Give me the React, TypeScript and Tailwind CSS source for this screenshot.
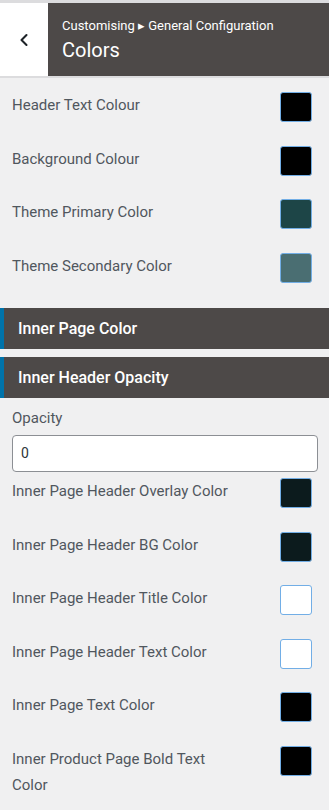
import { ChevronLeft } from "lucide-react";

type Row = { label: string; color: string };

const topRows: Row[] = [
  { label: "Header Text Colour", color: "#000000" },
  { label: "Background Colour", color: "#000000" },
  { label: "Theme Primary Color", color: "#1d4547" },
  { label: "Theme Secondary Color", color: "#4a6e72" },
];

const innerRows: Row[] = [
  { label: "Inner Page Header Overlay Color", color: "#0c1b1d" },
  { label: "Inner Page Header BG Color", color: "#0c1b1d" },
  { label: "Inner Page Header Title Color", color: "#ffffff" },
  { label: "Inner Page Header Text Color", color: "#ffffff" },
  { label: "Inner Page Text Color", color: "#000000" },
  { label: "Inner Product Page Bold Text Color", color: "#000000" },
];

const ColorRow = ({ row }: { row: Row }) => (
  <div className="flex h-[53.5px] items-start justify-between pl-3 pr-[17px]">
    <span className="w-[224px] text-[15px] leading-[26px] font-normal text-[#50575e]">
      {row.label}
    </span>
    <span
      className="block h-[30px] w-[32px] rounded-[3px] border border-[#72aee6]"
      style={{ backgroundColor: row.color }}
    />
  </div>
);

const SectionBar = ({ title }: { title: string }) => (
  <div className="flex h-[41px] items-center border-l-4 border-[#0073aa] bg-[#4d4948] pl-[14px]">
    <span className="text-[16px] font-medium text-white">{title}</span>
  </div>
);

export default function App() {
  return (
    <div
      className="min-h-[810px] w-[329px] bg-[#f0f0f1]"
      style={{ fontFamily: "Roboto, 'Liberation Sans', sans-serif" }}
    >
      <div className="border-t-[3px] border-b-2 border-[#dcdcde]">
        <div className="flex h-[73px]">
          <div className="flex w-[48px] items-center justify-center bg-white text-[#1d2327]">
            <ChevronLeft size={20} strokeWidth={2.5} />
          </div>
          <div className="flex flex-1 flex-col justify-center bg-[#4d4948] pl-[14px] text-white">
            <span className="text-[13px] leading-[18px]">
              Customising ▸ General Configuration
            </span>
            <span className="mt-[3px] text-[20px] leading-[24px]">Colors</span>
          </div>
        </div>
      </div>

      <div className="pt-[14px]">
        {topRows.map((row) => (
          <ColorRow key={row.label} row={row} />
        ))}
      </div>

      <div className="mt-[2px] flex flex-col gap-2">
        <SectionBar title="Inner Page Color" />
        <SectionBar title="Inner Header Opacity" />
      </div>

      <div className="px-3 pt-[8px]">
        <div className="text-[15px] leading-[24px] font-normal text-[#50575e]">Opacity</div>
        <div className="mt-[5px] flex h-[37px] w-[306px] items-center rounded-[4px] border border-[#8c8f94] bg-white px-2 text-[14px] text-[#2c3338]">
          0
        </div>
      </div>

      <div className="pt-[6px]">
        {innerRows.map((row) => (
          <ColorRow key={row.label} row={row} />
        ))}
      </div>
    </div>
  );
}
